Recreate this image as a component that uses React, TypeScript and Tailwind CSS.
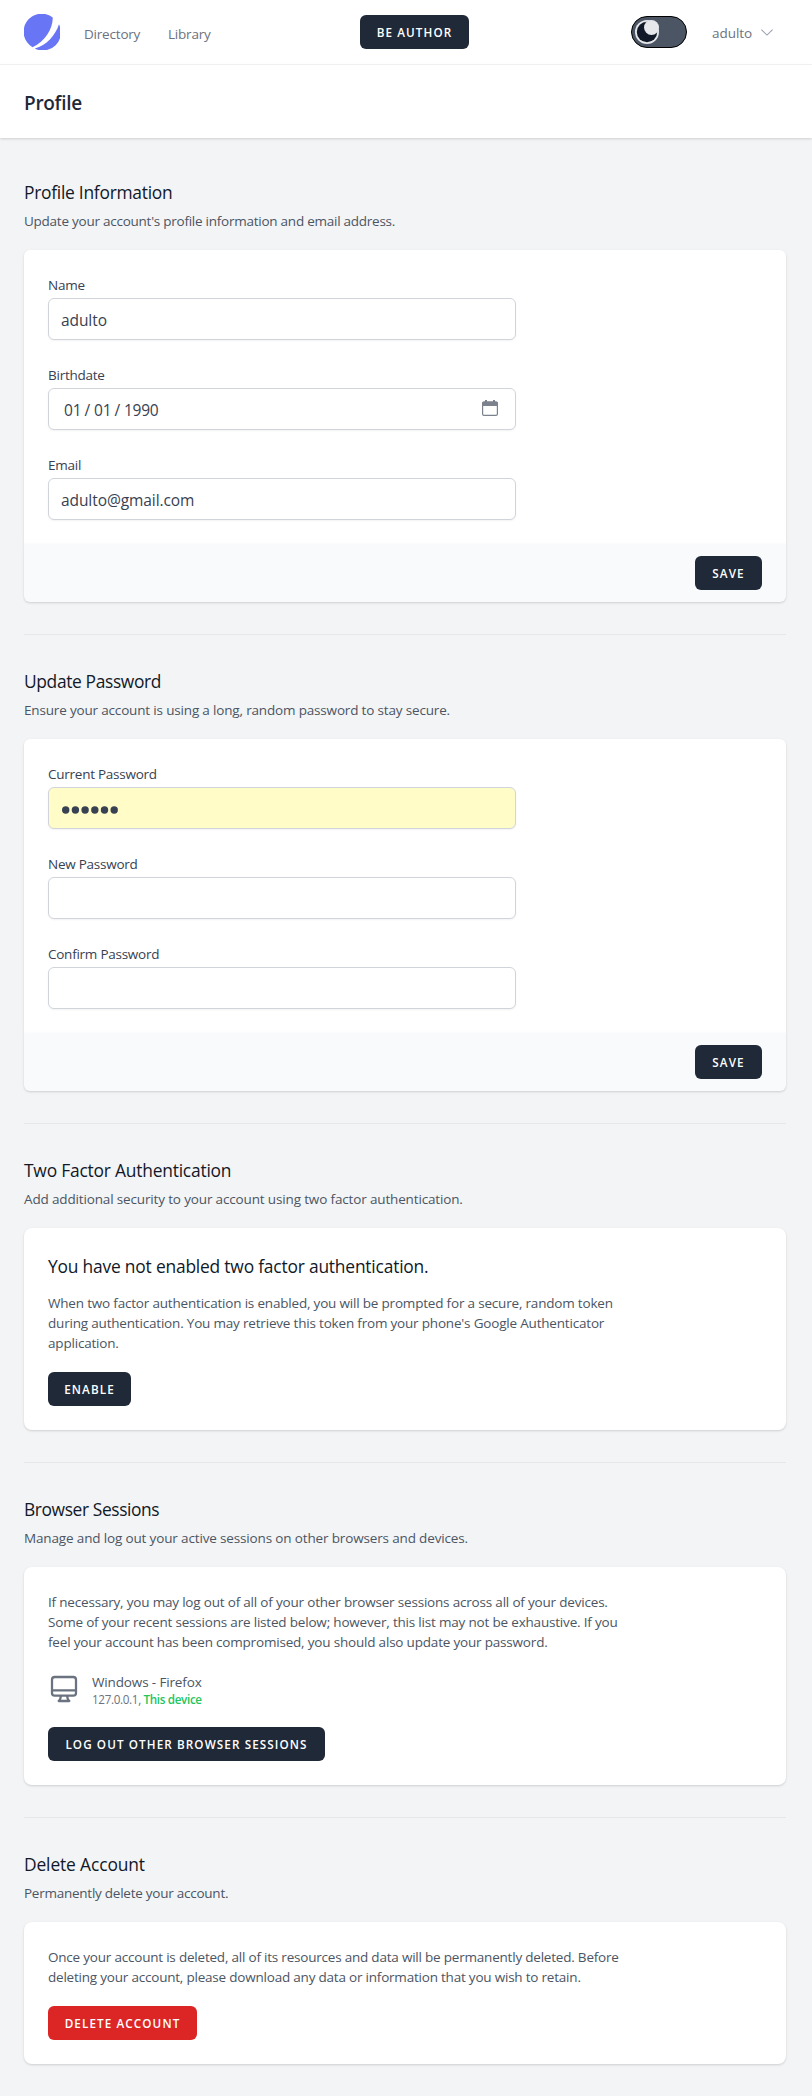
import type { ReactNode } from "react";

function Logo() {
  return (
    <svg className="size-9 shrink-0" viewBox="0 0 36 36" fill="#6875f5">
      <path d="M28.7 3.5C29.1 14 21.5 27.5 8.5 33.2A18 18 0 1 1 28.7 3.5Z" />
      <path d="M35 10.3C31.3 21.5 22.5 31.5 10.8 34.5A18 18 0 0 0 35 10.3Z" />
    </svg>
  );
}

function ThemeToggle() {
  return (
    <div className="flex h-8 w-14 items-center rounded-full border border-black bg-[#4b5563] pl-[3px]">
      <svg className="size-6" viewBox="0 0 24 24">
        <circle cx="12" cy="12" r="12" fill="#e5e7eb" />
        <circle cx="12" cy="12" r="10.2" fill="#111827" />
        <circle cx="16.5" cy="7.5" r="7.5" fill="#e5e7eb" />
      </svg>
    </div>
  );
}

function Button({ children, className }: { children: ReactNode; className: string }) {
  return (
    <button
      className={`inline-flex h-[34px] items-center justify-center rounded-md text-[11.7px] leading-4 font-semibold tracking-[1.1px] whitespace-nowrap text-white uppercase ${className}`}
    >
      {children}
    </button>
  );
}

function Section({
  title,
  description,
  children,
  titleClass = "tracking-[-0.26px]",
  descriptionClass = "tracking-[-0.17px]",
}: {
  title: string;
  description: string;
  children: ReactNode;
  titleClass?: string;
  descriptionClass?: string;
}) {
  return (
    <section>
      <h3 className={`text-[17.4px] leading-7 text-[#111827] ${titleClass}`}>{title}</h3>
      <p className={`mt-1 -mb-px pt-px text-[13.5px] leading-5 text-[#4b5563] ${descriptionClass}`}>{description}</p>
      <div className="mt-5">{children}</div>
    </section>
  );
}

function Divider() {
  return (
    <div className="py-8">
      <div className="border-t border-[#e5e7eb]" />
    </div>
  );
}

function Field({ label, children, className = "bg-white" }: { label: string; children?: ReactNode; className?: string }) {
  return (
    <div>
      <label className="-mb-px block pt-px text-[13.5px] leading-5 tracking-[-0.25px] text-[#374151]">{label}</label>
      <div
        className={`mt-1 flex h-[42px] w-[468px] items-center rounded-md border border-[#d1d5db] px-3 pt-0.5 text-[15.5px] leading-6 tracking-[-0.08px] text-[#374151] shadow-[0_1px_2px_0_rgba(0,0,0,0.05)] ${className}`}
      >
        {children}
      </div>
    </div>
  );
}

function FormCard({ children }: { children: ReactNode }) {
  return (
    <div>
      <div className="flex flex-col gap-6 rounded-t-md bg-white p-6 shadow-[0_1px_3px_0_rgba(0,0,0,0.1),0_1px_2px_0_rgba(0,0,0,0.06)]">
        {children}
      </div>
      <div className="flex justify-end rounded-b-md bg-[#f9fafb] px-6 py-3 shadow-[0_1px_3px_0_rgba(0,0,0,0.1),0_1px_2px_0_rgba(0,0,0,0.06)]">
        <Button className="w-[67px] bg-[#1f2937]">Save</Button>
      </div>
    </div>
  );
}

function Card({ children }: { children: ReactNode }) {
  return (
    <div className="rounded-lg bg-white p-6 shadow-[0_1px_3px_0_rgba(0,0,0,0.1),0_1px_2px_0_rgba(0,0,0,0.06)]">
      {children}
    </div>
  );
}

function Lines({ lines, className = "tracking-[-0.19px]" }: { lines: string[]; className?: string }) {
  return (
    <p className={`-mb-px pt-px text-[13.5px] leading-5 text-[#4b5563] ${className}`}>
      {lines.map((line) => (
        <span key={line} className="block whitespace-nowrap">
          {line}
        </span>
      ))}
    </p>
  );
}

function CalendarIcon() {
  return (
    <svg className="mr-[5px] mb-1 ml-auto size-4" viewBox="0 0 16 16">
      <path d="M3 0h2v2H3zM11 0h2v2h-2z" fill="#7b828d" />
      <rect x="0.6" y="2.2" width="14.8" height="13.2" rx="1.4" fill="none" stroke="#7b828d" strokeWidth="1.2" />
      <path d="M0 3.2A1.6 1.6 0 0 1 1.6 1.6h12.8A1.6 1.6 0 0 1 16 3.2V6H0z" fill="#7b828d" />
    </svg>
  );
}

export default function App() {
  return (
    <div
      className="h-[2096px] w-full overflow-hidden bg-[#f3f4f6] antialiased"
      style={{ fontFamily: '"Open Sans", "Noto Sans", sans-serif' }}
    >
      <nav className="flex h-[65px] items-center border-b border-[#f3f4f6] bg-white pr-[26px] pl-6 text-[13.5px] leading-5 tracking-[-0.2px] text-[#6b7280]">
        <div className="flex w-[336px] items-center">
          <Logo />
          <div className="ml-6 flex gap-7 pt-1">
            <a className="w-14">Directory</a>
            <a>Library</a>
          </div>
        </div>
        <Button className="w-[109px] bg-[#1f2937]">Be author</Button>
        <div className="ml-auto flex items-center pr-[13px]">
          <ThemeToggle />
          <span className="ml-[25px] w-[49px] pt-0.5 tracking-[-0.05px]">adulto</span>
          <svg className="h-[7px] w-3" viewBox="0 0 12 7" fill="none" stroke="#9ca3af" strokeWidth="1.1">
            <path d="M0.4 0.7 6 6.1 11.6 0.7" />
          </svg>
        </div>
      </nav>

      <header className="flow-root h-[73px] bg-white px-6 pt-[26px] shadow-[0_1px_3px_0_rgba(0,0,0,0.1),0_1px_2px_0_rgba(0,0,0,0.06)]">
        <h2 className="text-[19px] leading-[25px] font-semibold tracking-[-0.3px] text-[#1f2937]">Profile</h2>
      </header>

      <main className="pt-10 pr-[26px] pl-6">
        <Section
          title="Profile Information"
          description="Update your account's profile information and email address."
          descriptionClass="tracking-[-0.25px]"
        >
          <FormCard>
            <Field label="Name">adulto</Field>
            <Field label="Birthdate">
              <span className="ml-[3px] w-[20.5px]">01</span>
              <span className="w-[9.5px]">/</span>
              <span className="w-[20.5px]">01</span>
              <span className="w-[9.5px]">/</span>
              <span className="tracking-[-0.3px]">1990</span>
              <CalendarIcon />
            </Field>
            <Field label="Email">adulto@gmail.com</Field>
          </FormCard>
        </Section>
        <Divider />

        <Section
          title="Update Password"
          description="Ensure your account is using a long, random password to stay secure."
          titleClass="tracking-[-0.36px]"
        >
          <FormCard>
            <Field label="Current Password" className="bg-[#fffcc8]">
              <svg className="mt-px ml-px h-2 w-14" viewBox="0 0 56 8" fill="#374151">
                {[0, 1, 2, 3, 4, 5].map((i) => (
                  <circle key={i} cx={3.7 + i * 9.7} cy="4" r="3.7" />
                ))}
              </svg>
            </Field>
            <Field label="New Password" />
            <Field label="Confirm Password" />
          </FormCard>
        </Section>
        <Divider />

        <Section
          title="Two Factor Authentication"
          description="Add additional security to your account using two factor authentication."
          titleClass="tracking-[-0.21px]"
          descriptionClass="tracking-[-0.15px]"
        >
          <Card>
            <h3 className="mb-3 text-[17.4px] leading-7 tracking-[-0.2px] text-[#111827]">
              You have not enabled two factor authentication.
            </h3>
            <Lines
              lines={[
                "When two factor authentication is enabled, you will be prompted for a secure, random token",
                "during authentication. You may retrieve this token from your phone's Google Authenticator",
                "application.",
              ]}
            />
            <div className="mt-5 flex">
              <Button className="w-[83px] bg-[#1f2937]">Enable</Button>
            </div>
          </Card>
        </Section>
        <Divider />

        <Section
          title="Browser Sessions"
          description="Manage and log out your active sessions on other browsers and devices."
          titleClass="tracking-[-0.4px]"
          descriptionClass="tracking-[-0.15px]"
        >
          <Card>
            <Lines
              lines={[
                "If necessary, you may log out of all of your other browser sessions across all of your devices.",
                "Some of your recent sessions are listed below; however, this list may not be exhaustive. If you",
                "feel your account has been compromised, you should also update your password.",
              ]}
            />
            <div className="mt-5 flex items-center">
              <svg
                className="size-8 text-[#6b7280]"
                viewBox="0 0 24 24"
                fill="none"
                stroke="currentColor"
                strokeWidth="1.7"
                strokeLinecap="round"
                strokeLinejoin="round"
              >
                <path d="M9.75 17L9 20l-1 1h8l-1-1-.75-3M3 13h18M5 17h14a2 2 0 002-2V5a2 2 0 00-2-2H5a2 2 0 00-2 2v10a2 2 0 002 2z" />
              </svg>
              <div className="ml-3">
                <div className="-mb-px pt-px text-[13.5px] leading-5 tracking-[-0.14px] text-[#4b5563]">Windows - Firefox</div>
                <div className="text-[11.7px] leading-4 tracking-[-0.35px] text-[#6b7280]">
                  127.0.0.1, <span className="font-semibold text-[#22c55e]">This device</span>
                </div>
              </div>
            </div>
            <div className="mt-5 flex">
              <Button className="w-[277px] bg-[#1f2937]">Log out other browser sessions</Button>
            </div>
          </Card>
        </Section>
        <Divider />

        <Section
          title="Delete Account"
          description="Permanently delete your account."
          titleClass="tracking-[-0.13px]"
          descriptionClass="tracking-[-0.25px]"
        >
          <Card>
            <Lines
              className="tracking-[-0.21px]"
              lines={[
                "Once your account is deleted, all of its resources and data will be permanently deleted. Before",
                "deleting your account, please download any data or information that you wish to retain.",
              ]}
            />
            <div className="mt-5 flex">
              <Button className="w-[149px] bg-[#dc2626]">Delete account</Button>
            </div>
          </Card>
        </Section>
      </main>
    </div>
  );
}
